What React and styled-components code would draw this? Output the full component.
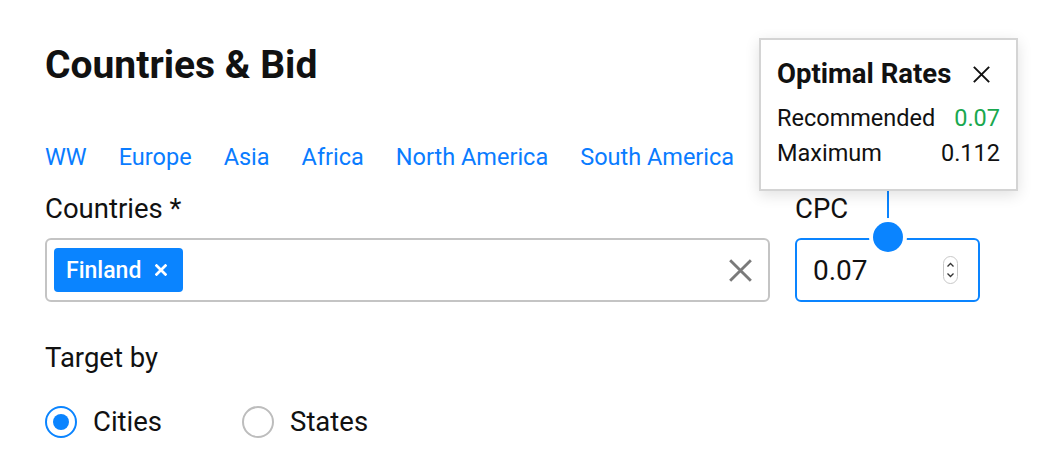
import React from 'react';
import styled, { createGlobalStyle } from 'styled-components';

const GlobalStyle = createGlobalStyle`
  body {
    margin: 0;
    background: #fff;
    font-family: Roboto, "Liberation Sans", sans-serif;
    color: #111;
  }
`;

const Page = styled.div`
  width: 1040px;
  height: 474px;
  padding: 36px 0 0 45px;
  box-sizing: border-box;
`;

const Title = styled.h1`
  margin: 0;
  font-size: 39px;
  font-weight: 700;
  line-height: 58px;
  color: #111;
`;

const Regions = styled.div`
  display: flex;
  gap: 32px;
  margin-top: 48px;
`;

const RegionLink = styled.a`
  font-size: 23.5px;
  line-height: 30px;
  color: #0a7cff;
  text-decoration: none;
  cursor: pointer;
`;

const FieldRow = styled.div`
  display: flex;
  gap: 25px;
  margin-top: 22px;
`;

const Field = styled.div`
  display: flex;
  flex-direction: column;
  gap: 14px;
  width: ${p => p.width}px;
  position: relative;
`;

const Label = styled.div`
  font-size: 27.5px;
  line-height: 30px;
  color: #111;
`;

const SelectBox = styled.div`
  height: 64px;
  box-sizing: border-box;
  border: 2px solid #c4c4c4;
  border-radius: 6px;
  display: flex;
  align-items: center;
  padding: 0 16px 0 7px;
`;

const Chip = styled.span`
  display: inline-flex;
  align-items: center;
  gap: 14px;
  height: 44px;
  padding: 0 16px 0 12px;
  background: #0a84ff;
  color: #fff;
  border-radius: 4px;
  font-size: 23px;
  font-weight: 500;
`;

const Spacer = styled.div`
  flex: 1;
`;

const NumberBox = styled.div`
  height: 64px;
  box-sizing: border-box;
  border: 2px solid #0a84ff;
  border-radius: 6px;
  display: flex;
  align-items: center;
  padding: 0 20px 0 16px;
  font-size: 28px;
`;

const Popover = styled.div`
  position: absolute;
  left: -36px;
  top: -156px;
  width: 259px;
  height: 153px;
  box-sizing: border-box;
  background: #fff;
  border: 2px solid #d4d4d4;
  box-shadow: 0 4px 14px rgba(0, 0, 0, 0.12);
  padding: 14px 16px 0 16px;
  z-index: 2;
`;

const PopHead = styled.div`
  display: flex;
  align-items: center;
  justify-content: space-between;
  margin-bottom: 7px;
`;

const PopTitle = styled.div`
  font-size: 27.5px;
  font-weight: 700;
  line-height: 40px;
`;

const PopRow = styled.div`
  display: flex;
  justify-content: space-between;
  font-size: 23.5px;
  line-height: 35px;
  color: #111;
`;

const Value = styled.span`
  color: ${p => (p.$good ? '#19a84f' : '#111')};
`;

const CloseWrap = styled.span`
  display: flex;
  margin-right: 10px;
`;

const Pointer = styled.div`
  position: absolute;
  left: 92px;
  top: -6px;
  width: 2px;
  height: 40px;
  background: #0a84ff;
  z-index: 1;
`;

const Knob = styled.div`
  position: absolute;
  left: 78px;
  top: 28px;
  width: 30px;
  height: 30px;
  border-radius: 50%;
  background: #0a84ff;
  box-shadow: 0 0 0 4px #fff;
  z-index: 1;
`;

const TargetBlock = styled.div`
  margin-top: 41px;
`;

const Radios = styled.div`
  display: flex;
  gap: 80px;
  margin-top: 32px;
`;

const RadioItem = styled.label`
  display: flex;
  align-items: center;
  gap: 16px;
  font-size: 27.5px;
  cursor: pointer;
`;

const RadioCircle = styled.span`
  width: 32px;
  height: 32px;
  box-sizing: border-box;
  border-radius: 50%;
  border: 2px solid ${p => (p.$on ? '#0a84ff' : '#bdbdbd')};
  display: flex;
  align-items: center;
  justify-content: center;
  &::after {
    content: '';
    width: 16px;
    height: 16px;
    border-radius: 50%;
    background: ${p => (p.$on ? '#0a84ff' : 'transparent')};
  }
`;

const Cross = ({ size, color, width }) => (
  <svg width={size} height={size} viewBox="0 0 20 20">
    <path d="M1 1 L19 19 M19 1 L1 19" stroke={color} strokeWidth={width} />
  </svg>
);

const Spinner = () => (
  <svg width="15" height="28" viewBox="0 0 15 28">
    <rect x="0.5" y="0.5" width="14" height="27" rx="7" fill="#fff" stroke="#c8c8c8" />
    <path d="M4.5 10.5 L7.5 7.5 L10.5 10.5 M4.5 17.5 L7.5 20.5 L10.5 17.5" fill="none" stroke="#333" strokeWidth="1.3" />
  </svg>
);

const regions = ['WW', 'Europe', 'Asia', 'Africa', 'North America', 'South America'];

const App = () => {
  return (
    <Page>
      <GlobalStyle />
      <Title>Countries &amp; Bid</Title>
      <Regions>
        {regions.map(r => (
          <RegionLink key={r}>{r}</RegionLink>
        ))}
      </Regions>
      <FieldRow>
        <Field width={725}>
          <Label>Countries *</Label>
          <SelectBox>
            <Chip>
              Finland
              <Cross size={12} color="#fff" width={4.5} />
            </Chip>
            <Spacer />
            <Cross size={23} color="#7a7a7a" width={2.5} />
          </SelectBox>
        </Field>
        <Field width={185}>
          <Popover>
            <PopHead>
              <PopTitle>Optimal Rates</PopTitle>
              <CloseWrap>
                <Cross size={17} color="#111" width={2.3} />
              </CloseWrap>
            </PopHead>
            <PopRow>
              <span>Recommended</span>
              <Value $good>0.07</Value>
            </PopRow>
            <PopRow>
              <span>Maximum</span>
              <Value>0.112</Value>
            </PopRow>
          </Popover>
          <Label>CPC</Label>
          <NumberBox>
            0.07
            <Spacer />
            <Spinner />
          </NumberBox>
          <Pointer />
          <Knob />
        </Field>
      </FieldRow>
      <TargetBlock>
        <Label>Target by</Label>
        <Radios>
          <RadioItem>
            <RadioCircle $on />
            Cities
          </RadioItem>
          <RadioItem>
            <RadioCircle />
            States
          </RadioItem>
        </Radios>
      </TargetBlock>
    </Page>
  );
};

export default App;
